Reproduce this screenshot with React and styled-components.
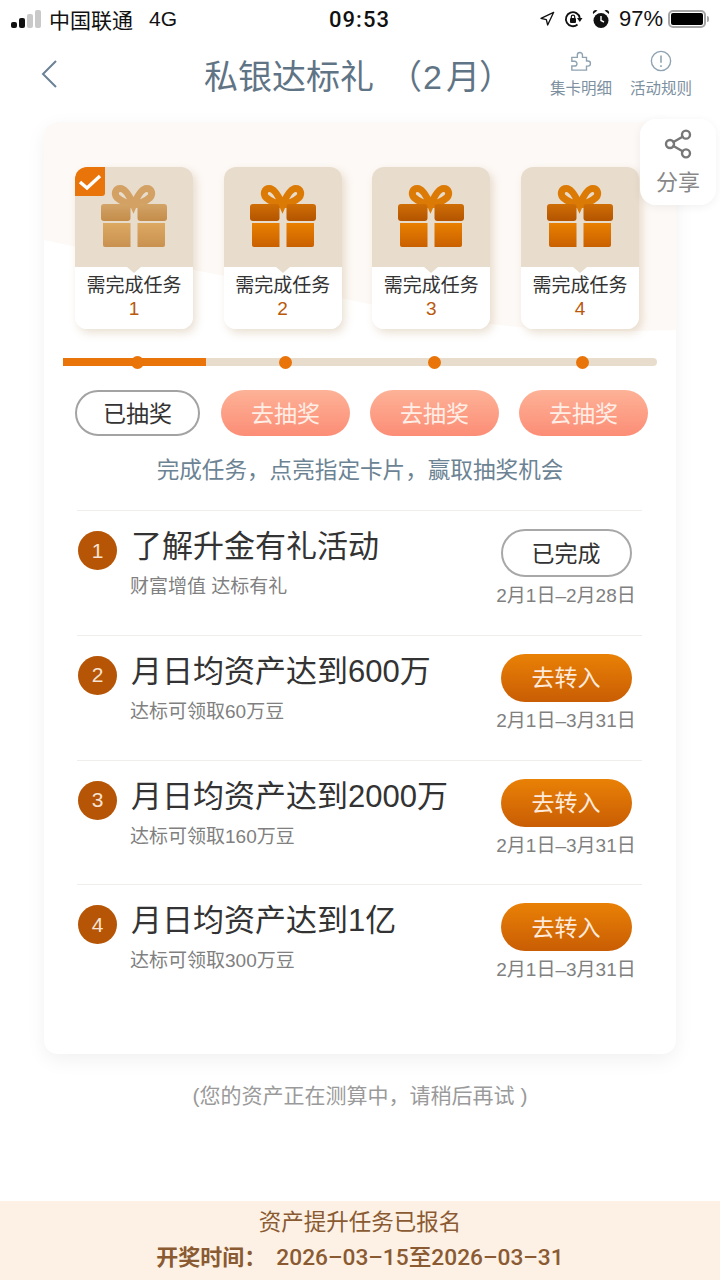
import React from 'react';
import styled, { createGlobalStyle } from 'styled-components';
import { Share2, Navigation } from 'lucide-react';

const GlobalStyle = createGlobalStyle`
  * { box-sizing: border-box; }
  body {
    margin: 0;
    background: #fff;
    font-family: "Liberation Sans", "Noto Sans CJK SC", sans-serif;
  }
`;

const gifts = [
  { id: 1, done: true },
  { id: 2 },
  { id: 3 },
  { id: 4 },
];

const tasks = [
  { id: 1, title: '了解升金有礼活动', sub: '财富增值 达标有礼', date: '2月1日–2月28日', done: true, action: '已完成' },
  { id: 2, title: '月日均资产达到600万', sub: '达标可领取60万豆', date: '2月1日–3月31日', action: '去转入' },
  { id: 3, title: '月日均资产达到2000万', sub: '达标可领取160万豆', date: '2月1日–3月31日', action: '去转入' },
  { id: 4, title: '月日均资产达到1亿', sub: '达标可领取300万豆', date: '2月1日–3月31日', action: '去转入' },
];

const GiftIcon = ({ id, faded }) => {
  const lid = faded ? ['#d3a468', '#c48c4a'] : ['#cf6e06', '#b35400'];
  const base = faded ? ['#dca962', '#c99150'] : ['#e98000', '#c96000'];
  const bow = faded ? '#d2a163' : '#dc7a06';
  return (
    <svg width="66" height="62" viewBox="0 0 66 62">
      <defs>
        <linearGradient id={`lid${id}`} x1="0" y1="0" x2="0" y2="1">
          <stop offset="0" stopColor={lid[0]} />
          <stop offset="1" stopColor={lid[1]} />
        </linearGradient>
        <linearGradient id={`base${id}`} x1="0" y1="0" x2="0" y2="1">
          <stop offset="0" stopColor={base[0]} />
          <stop offset="1" stopColor={base[1]} />
        </linearGradient>
      </defs>
      <path
        d="M32.500 20 C29 12 24 3.500 19.500 3.500 C14 3.500 13 9 16 12.500 C20 16 26 19 32.500 20 C39 19 45 16 49 12.500 C52 9 51 3.500 45.500 3.500 C41 3.500 36 12 32.500 20 Z"
        fill="none"
        stroke={bow}
        strokeWidth="7"
      />
      <rect x="0" y="19" width="29.500" height="17" rx="3" fill={`url(#lid${id})`} />
      <rect x="36.500" y="19" width="29.500" height="17" rx="3" fill={`url(#lid${id})`} />
      <path d="M2 38 H29.500 V62 H4 a2 2 0 0 1 -2 -2 Z" fill={`url(#base${id})`} />
      <path d="M36.500 38 H64 V60 a2 2 0 0 1 -2 2 H36.500 Z" fill={`url(#base${id})`} />
    </svg>
  );
};

const App = () => {
  return (
    <Page>
      <GlobalStyle />
      <StatusBar>
        <StatusLeft>
          <svg width="32" height="20" viewBox="0 0 32 20">
            <rect x="0" y="13" width="6" height="6" rx="2" fill="#111" />
            <rect x="8" y="9" width="6" height="10" rx="2" fill="#111" />
            <rect x="16" y="5" width="6" height="14" rx="2" fill="#c9c9c9" />
            <rect x="24" y="1" width="6" height="18" rx="2" fill="#c9c9c9" />
          </svg>
          <Carrier>中国联通</Carrier>
          <Network>4G</Network>
        </StatusLeft>
        <Clock>09:53</Clock>
        <StatusRight>
          <Navigation size={16} color="#111" strokeWidth={2} />
          <svg width="19" height="18" viewBox="0 0 19 18">
            <path d="M15.800 8 A7 7 0 1 0 13.500 14.500" fill="none" stroke="#111" strokeWidth="1.800" />
            <path d="M13 8 H18.500 L15.800 12 Z" fill="#111" />
            <rect x="6" y="8" width="6" height="5" rx="1" fill="#111" />
            <path d="M7.300 8 V6.800 a1.700 1.700 0 0 1 3.400 0 V8" fill="none" stroke="#111" strokeWidth="1.200" />
          </svg>
          <svg width="18" height="20" viewBox="0 0 18 20">
            <circle cx="9" cy="11.500" r="7.500" fill="#111" />
            <path d="M1 5 A3 3 0 0 1 5.500 1.500 Z M17 5 A3 3 0 0 0 12.500 1.500 Z" fill="#111" />
            <path d="M9 7 V11.500 L12 13" fill="none" stroke="#fff" strokeWidth="1.400" />
          </svg>
          <Percent>97%</Percent>
          <Battery>
            <BatteryLevel />
          </Battery>
        </StatusRight>
      </StatusBar>

      <NavBar>
        <svg width="16" height="28" viewBox="0 0 16 28">
          <path d="M15 1 L2 14 L15 27" fill="none" stroke="#6c8294" strokeWidth="2" />
        </svg>
        <NavTitle>
          私银达标礼<TitleBracket $open>（</TitleBracket>
          <TitleDigit>2</TitleDigit>月<TitleBracket>）</TitleBracket>
        </NavTitle>
        <NavActions>
          <NavAction>
            <svg width="22" height="22" viewBox="0 0 24 24">
              <path
                d="M2 8 H8 V5.500 a2.800 2.800 0 1 1 5.600 0 V8 H18 V12 H19.500 a2.800 2.800 0 0 1 0 5.600 H18 V22 H2 V17.500 H5 a2.600 2.600 0 0 0 0 -5.200 H2 Z"
                fill="none"
                stroke="#8ea2b1"
                strokeWidth="1.500"
              />
            </svg>
            <span>集卡明细</span>
          </NavAction>
          <NavAction>
            <svg width="22" height="22" viewBox="0 0 24 24">
              <circle cx="12" cy="12" r="10.500" fill="none" stroke="#8ea2b1" strokeWidth="1.500" />
              <path d="M12 6 V14 M12 16.500 V18.500" fill="none" stroke="#8ea2b1" strokeWidth="1.700" />
            </svg>
            <span>活动规则</span>
          </NavAction>
        </NavActions>
      </NavBar>

      <Card>
        <Wash viewBox="0 0 632 210" preserveAspectRatio="none">
          <path
            d="M0 14 a14 14 0 0 1 14 -14 H618 a14 14 0 0 1 14 14 V208 C520 212 440 205 340 185 C220 160 100 140 0 118 Z"
            fill="#fdf9f6"
          />
        </Wash>
        <ShareBox>
          <Share2 size={32} color="#777" strokeWidth={1.800} />
          <span>分享</span>
        </ShareBox>

        <GiftRow>
          {gifts.map((gift) => (
            <GiftCard key={gift.id}>
              <GiftTop>
                <GiftIcon id={gift.id} faded={gift.done} />
                {gift.done && (
                  <CheckBadge>
                    <svg width="24" height="18" viewBox="0 0 24 18">
                      <path d="M2 9 L9 15 L22 3" fill="none" stroke="#fff" strokeWidth="3.400" />
                    </svg>
                  </CheckBadge>
                )}
              </GiftTop>
              <GiftLabel>
                需完成任务
                <GiftNumber>{gift.id}</GiftNumber>
              </GiftLabel>
            </GiftCard>
          ))}
        </GiftRow>

        <Track>
          {gifts.map((gift) => (
            <TrackCell key={gift.id}>
              <TrackDot />
            </TrackCell>
          ))}
        </Track>

        <DrawRow>
          {gifts.map((gift) => (
            <DrawButton key={gift.id} $done={gift.done}>
              {gift.done ? '已抽奖' : '去抽奖'}
            </DrawButton>
          ))}
        </DrawRow>

        <Hint>完成任务，点亮指定卡片，赢取抽奖机会</Hint>

        <TaskList>
          {tasks.map((task) => (
            <TaskRow key={task.id}>
              <TaskNumber>{task.id}</TaskNumber>
              <TaskText>
                <TaskTitle>{task.title}</TaskTitle>
                <TaskSub>{task.sub}</TaskSub>
              </TaskText>
              <TaskSide>
                <TaskButton $done={task.done}>{task.action}</TaskButton>
                <TaskDate>{task.date}</TaskDate>
              </TaskSide>
            </TaskRow>
          ))}
        </TaskList>
      </Card>

      <Note>(您的资产正在测算中，请稍后再试 )</Note>

      <Footer>
        <FooterLine>资产提升任务已报名</FooterLine>
        <FooterDraw>
          <b>开奖时间：</b>
          <span>2026–03–15至2026–03–31</span>
        </FooterDraw>
      </Footer>
    </Page>
  );
};

export default App;

const Page = styled.div`
  display: flex;
  flex-direction: column;
  width: 720px;
  height: 1280px;
  overflow: hidden;
  background: #fff;
`;

const StatusBar = styled.div`
  display: grid;
  grid-template-columns: 1fr auto 1fr;
  align-items: center;
  height: 38px;
  padding: 0 12px 0 11px;
  color: #111;
`;

const StatusLeft = styled.div`
  display: flex;
  align-items: center;
`;

const Carrier = styled.span`
  margin-left: 6px;
  font-size: 21px;
`;

const Network = styled.span`
  margin-left: 16px;
  font-size: 21px;
`;

const Clock = styled.div`
  font-family: "Roboto", sans-serif;
  font-size: 22px;
  font-weight: 500;
  letter-spacing: 1px;
`;

const StatusRight = styled.div`
  display: flex;
  align-items: center;
  justify-content: flex-end;
  gap: 9px;
`;

const Percent = styled.span`
  font-size: 22px;
`;

const Battery = styled.div`
  position: relative;
  width: 38px;
  height: 18px;
  margin-left: -4px;
  margin-right: 2px;
  padding: 1px;
  border: 2px solid #a5a5a5;
  border-radius: 5px;

  &::after {
    content: '';
    position: absolute;
    top: 4px;
    right: -5px;
    width: 2px;
    height: 6px;
    background: #a5a5a5;
    border-radius: 0 2px 2px 0;
  }
`;

const BatteryLevel = styled.div`
  width: 100%;
  height: 100%;
  background: #000;
  border-radius: 2px;
`;

const NavBar = styled.div`
  display: flex;
  align-items: center;
  height: 84px;
  padding: 0 28px 12px 41px;
`;

const NavTitle = styled.div`
  margin-left: 147px;
  font-size: 34px;
  color: #5f7485;
  white-space: nowrap;
`;

const TitleBracket = styled.span`
  margin: ${(p) => (p.$open ? '0 1px 0 14px' : '0 0 0 -1px')};
`;

const TitleDigit = styled.span`
  letter-spacing: 4px;
`;

const NavActions = styled.div`
  display: flex;
  gap: 18px;
  margin-left: auto;
`;

const NavAction = styled.div`
  display: flex;
  flex-direction: column;
  align-items: center;
  gap: 4px;
  font-size: 15.500px;
  color: #7c90a0;
`;

const Card = styled.div`
  position: relative;
  flex: none;
  width: 632px;
  height: 932px;
  margin-left: 44px;
  padding-top: 45px;
  background: #fff;
  border-radius: 14px;
  box-shadow: 0 6px 20px rgba(0, 0, 0, 0.06);
`;

const Wash = styled.svg`
  position: absolute;
  top: 0;
  left: 0;
  width: 632px;
  height: 210px;
`;

const ShareBox = styled.div`
  position: absolute;
  top: -3px;
  right: -40px;
  z-index: 2;
  display: flex;
  flex-direction: column;
  align-items: center;
  justify-content: center;
  gap: 4px;
  width: 76px;
  height: 86px;
  font-size: 22px;
  color: #888;
  background: rgba(255, 255, 255, 0.96);
  border-radius: 16px;
  box-shadow: 0 2px 10px rgba(0, 0, 0, 0.06);
`;

const GiftRow = styled.div`
  position: relative;
  display: flex;
  justify-content: space-between;
  padding: 0 37px 0 31px;
`;

const GiftCard = styled.div`
  width: 118px;
  height: 162px;
  border-radius: 12px;
  box-shadow: 3px 4px 8px rgba(170, 130, 80, 0.25);
  overflow: hidden;
`;

const GiftTop = styled.div`
  position: relative;
  display: flex;
  justify-content: center;
  height: 100px;
  padding-top: 18px;
  background: #e8dccd;
`;

const CheckBadge = styled.div`
  position: absolute;
  top: 0;
  left: 0;
  display: flex;
  align-items: center;
  justify-content: center;
  width: 30px;
  height: 29px;
  background: #e9740a;
  border-radius: 10px 0 3px 0;
`;

const GiftLabel = styled.div`
  position: relative;
  display: flex;
  flex-direction: column;
  align-items: center;
  height: 62px;
  padding-top: 6px;
  font-size: 19px;
  line-height: 25px;
  color: #333;
  background: #fff;

  &::before {
    content: '';
    position: absolute;
    top: 0;
    left: 50%;
    margin-left: -7px;
    border-top: 6px solid #e8dccd;
    border-left: 7px solid transparent;
    border-right: 7px solid transparent;
  }
`;

const GiftNumber = styled.span`
  font-size: 19px;
  line-height: 21px;
  color: #b9590c;
`;

const Track = styled.div`
  position: relative;
  display: flex;
  height: 8px;
  margin: 29px 19px 0;
  background: linear-gradient(to right, #e8740a 143px, #e8dccd 143px);
  border-radius: 0 4px 4px 0;
`;

const TrackCell = styled.div`
  flex: 1;
  display: flex;
  align-items: center;
  justify-content: center;
`;

const TrackDot = styled.div`
  flex: none;
  width: 13px;
  height: 13px;
  background: #e8740a;
  border-radius: 50%;
`;

const DrawRow = styled.div`
  display: flex;
  gap: 20px;
  margin-top: 24px;
  padding-left: 31px;
`;

const DrawButton = styled.div`
  display: flex;
  align-items: center;
  justify-content: center;
  width: ${(p) => (p.$done ? '125px' : '129px')};
  height: 46px;
  margin-right: ${(p) => (p.$done ? '1px' : '0')};
  padding-bottom: 3px;
  font-size: 23px;
  color: ${(p) => (p.$done ? '#333' : '#ffeee6')};
  background: ${(p) => (p.$done ? '#fff' : 'linear-gradient(#fdb297, #fc8d76)')};
  border: ${(p) => (p.$done ? '2px solid #a3a3a3' : 'none')};
  border-radius: 23px;
`;

const Hint = styled.div`
  margin-top: 20px;
  font-size: 22.600px;
  line-height: 30px;
  text-align: center;
  color: #6c8394;
`;

const TaskList = styled.div`
  margin: 24px 34px 0 33px;
`;

const TaskRow = styled.div`
  display: flex;
  align-items: flex-start;
  height: 124.800px;
  padding: 18px 6px 0 1px;
  border-top: 1px solid #f0eeec;
`;

const TaskNumber = styled.div`
  flex: none;
  display: flex;
  align-items: center;
  justify-content: center;
  width: 39px;
  height: 39px;
  margin-top: 2px;
  font-size: 21px;
  color: #f6e3d2;
  background: #b65505;
  border-radius: 50%;
`;

const TaskText = styled.div`
  flex: 1;
  margin-left: 14px;
`;

const TaskTitle = styled.div`
  margin-top: -2px;
  font-size: 31px;
  line-height: 40px;
  color: #333;
  white-space: nowrap;
`;

const TaskSub = styled.div`
  margin-top: 7px;
  margin-left: -1px;
  font-size: 19px;
  line-height: 26px;
  color: #808080;
`;

const TaskSide = styled.div`
  flex: none;
  display: flex;
  flex-direction: column;
  align-items: center;
  width: 140px;
`;

const TaskButton = styled.div`
  display: flex;
  align-items: center;
  justify-content: center;
  width: 131px;
  height: 48px;
  padding-bottom: 3px;
  font-size: 23px;
  color: ${(p) => (p.$done ? '#333' : '#ffeadb')};
  background: ${(p) => (p.$done ? '#fff' : 'linear-gradient(#e98106, #c95d04)')};
  border: ${(p) => (p.$done ? '2px solid #a8a8a8' : 'none')};
  border-radius: 24px;
`;

const TaskDate = styled.div`
  margin-top: 6px;
  font-size: 19px;
  line-height: 26px;
  color: #808080;
  white-space: nowrap;
`;

const Note = styled.div`
  margin-top: 28px;
  font-size: 21px;
  line-height: 28px;
  text-align: center;
  color: #9a9a9a;
`;

const Footer = styled.div`
  display: flex;
  flex-direction: column;
  align-items: center;
  height: 79px;
  margin-top: auto;
  padding-top: 7px;
  color: #8a5a32;
  background: #fdf1e5;
`;

const FooterLine = styled.div`
  font-size: 22.500px;
  line-height: 30px;
`;

const FooterDraw = styled.div`
  display: flex;
  align-items: center;
  gap: 10px;
  margin-top: 5px;
  line-height: 30px;

  b {
    font-size: 22px;
  }

  span {
    font-family: "Roboto", "Noto Sans CJK SC", sans-serif;
    font-size: 22.700px;
    font-weight: 500;
  }
`;
